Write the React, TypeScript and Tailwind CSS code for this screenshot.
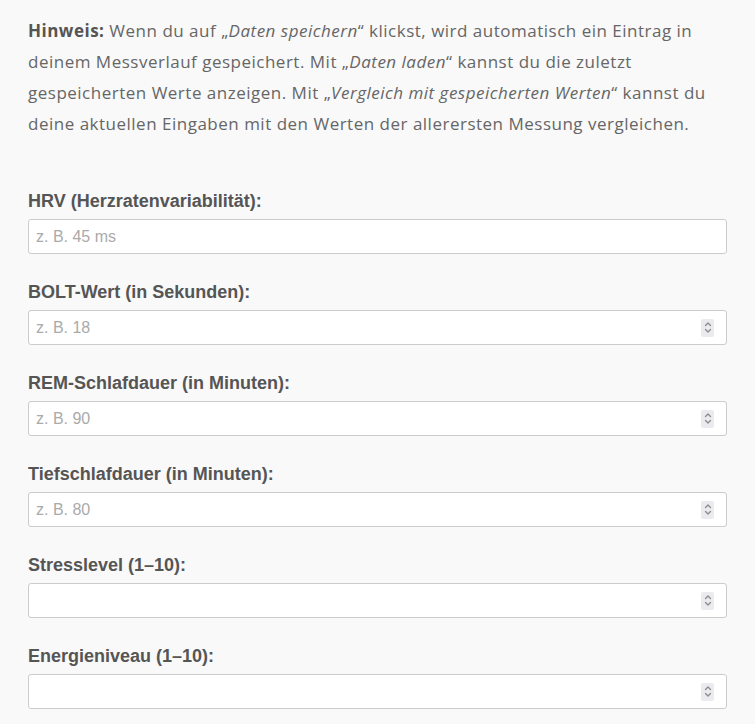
import React from "react"

const fields = [
  { label: "HRV (Herzratenvariabilität):", placeholder: "z. B. 45 ms", spin: false },
  { label: "BOLT-Wert (in Sekunden):", placeholder: "z. B. 18", spin: true },
  { label: "REM-Schlafdauer (in Minuten):", placeholder: "z. B. 90", spin: true },
  { label: "Tiefschlafdauer (in Minuten):", placeholder: "z. B. 80", spin: true },
  { label: "Stresslevel (1–10):", placeholder: "", spin: true },
  { label: "Energieniveau (1–10):", placeholder: "", spin: true },
]

function Spinner() {
  return (
    <div className="pointer-events-none absolute right-[13px] top-1/2 flex h-[18px] w-[13px] -translate-y-1/2 items-center justify-center rounded-[2px] bg-[#ebebef]">
      <svg width="8" height="13" viewBox="0 0 8 13" fill="none" stroke="#8a8a8a" strokeWidth="1.3" strokeLinecap="round" strokeLinejoin="round">
        <path d="M1.5 4.5 L4 2 L6.5 4.5" />
        <path d="M1.5 8.5 L4 11 L6.5 8.5" />
      </svg>
    </div>
  )
}

export default function App() {
  return (
    <div className="min-h-screen bg-[#f9f9f9] px-[28px] pt-[15px] pb-[15px]">
      {/* Hinweis */}
      <p className="font-['Open_Sans',sans-serif] text-[17px] leading-[31px] tracking-[0.5px] text-[#666]">
        <strong className="font-bold text-[#555]">Hinweis:</strong> Wenn du auf „<em>Daten speichern</em>“ klickst, wird automatisch ein Eintrag in
        <br />
        deinem Messverlauf gespeichert. Mit „<em>Daten laden</em>“ kannst du die zuletzt
        <br />
        gespeicherten Werte anzeigen. Mit „<em>Vergleich mit gespeicherten Werten</em>“ kannst du
        <br />
        deine aktuellen Eingaben mit den Werten der allerersten Messung vergleichen.
      </p>

      <div className="mt-[52px] flex flex-col gap-[28px] font-['Liberation_Sans',Arial,sans-serif]">
        {fields.map((f) => (
          <div key={f.label}>
            <label className="block text-[18px] font-bold leading-[20px] text-[#555]">{f.label}</label>
            <div className="relative mt-[8px]">
              <input
                type="text"
                placeholder={f.placeholder}
                className="block h-[35px] w-full rounded-[3px] border border-[#ccc] bg-white px-[7px] text-[16px] text-[#555] placeholder:text-[#aaa] focus:outline-none"
              />
              {f.spin && <Spinner />}
            </div>
          </div>
        ))}
      </div>
    </div>
  )
}
